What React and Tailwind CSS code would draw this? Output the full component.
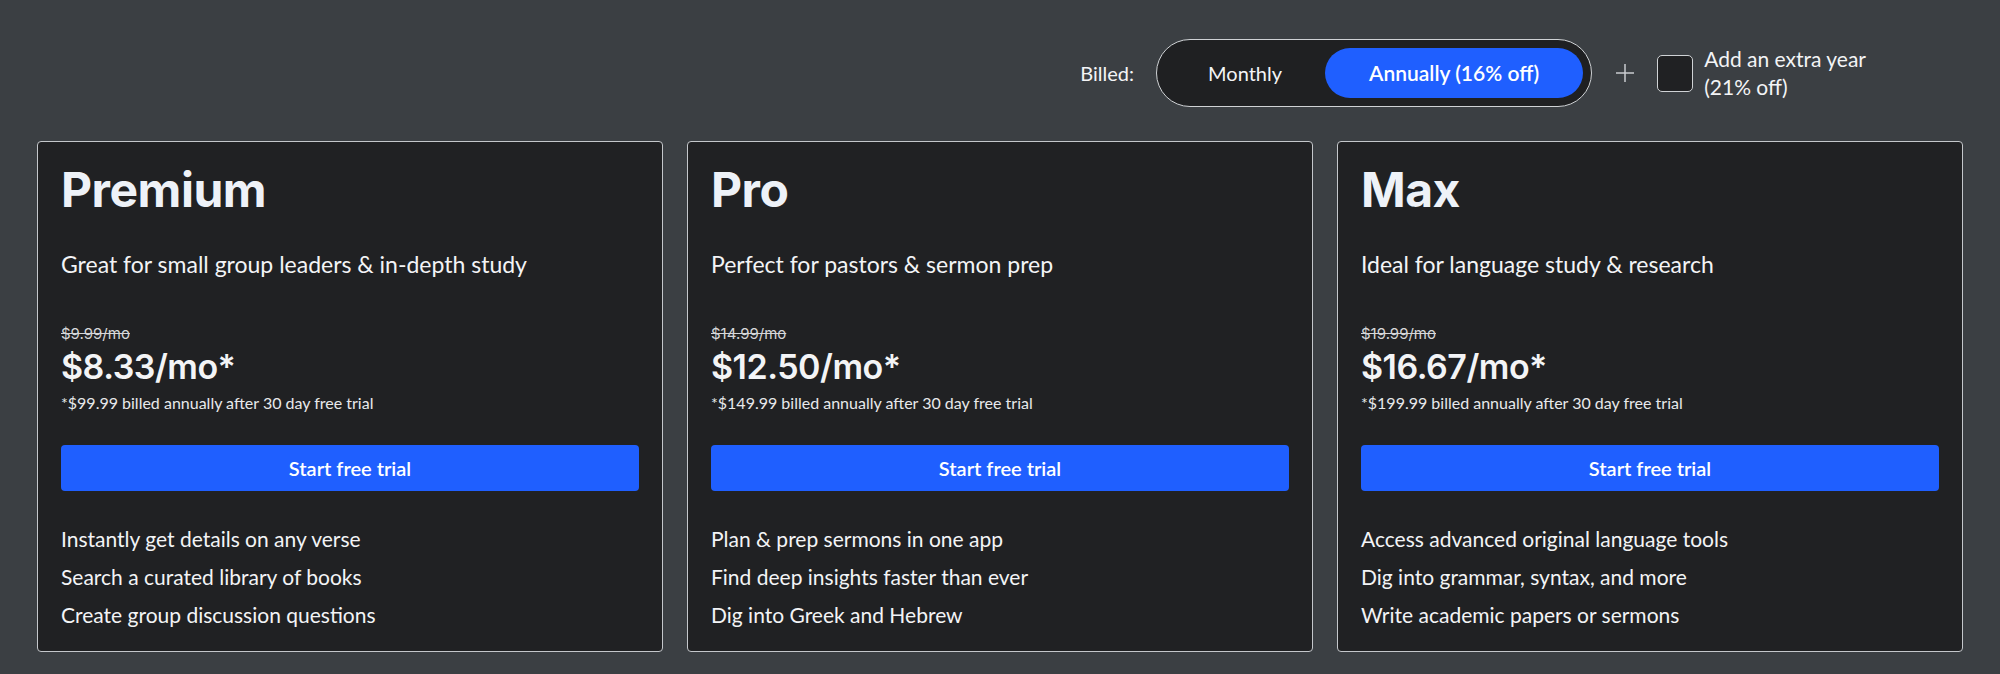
import React from "react";

const plans = [
  {
    name: "Premium",
    desc: "Great for small group leaders & in-depth study",
    old: "$9.99/mo",
    price: "$8.33/mo*",
    note: "*$99.99 billed annually after 30 day free trial",
    features: [
      "Instantly get details on any verse",
      "Search a curated library of books",
      "Create group discussion questions",
    ],
  },
  {
    name: "Pro",
    desc: "Perfect for pastors & sermon prep",
    old: "$14.99/mo",
    price: "$12.50/mo*",
    note: "*$149.99 billed annually after 30 day free trial",
    features: [
      "Plan & prep sermons in one app",
      "Find deep insights faster than ever",
      "Dig into Greek and Hebrew",
    ],
  },
  {
    name: "Max",
    desc: "Ideal for language study & research",
    old: "$19.99/mo",
    price: "$16.67/mo*",
    note: "*$199.99 billed annually after 30 day free trial",
    features: [
      "Access advanced original language tools",
      "Dig into grammar, syntax, and more",
      "Write academic papers or sermons",
    ],
  },
];

const body = { fontFamily: "Lato, 'Noto Sans', sans-serif" };
const head = { fontFamily: "Inter, 'Noto Sans', sans-serif" };

function Card({ p }) {
  return (
    <div className="flex flex-col rounded-[4px] border border-[#c4c7cb] bg-[#202123] px-[23px] pt-6 pb-[17px] text-[#f3f4f6]">
      <h2 style={head} className="text-[48px] font-bold leading-none tracking-[-0.5px] text-[#eef2f8]">
        {p.name}
      </h2>
      <p style={body} className="mt-[37px] text-[23px] leading-[26px]">
        {p.desc}
      </p>
      <div style={head} className="mt-[47px] text-[15px] leading-[20px] text-[#d6d7d9] line-through">
        {p.old}
      </div>
      <div style={head} className="mt-[6px] text-[34px] font-semibold leading-none tracking-[-0.5px]">
        {p.price}
      </div>
      <div style={body} className="mt-[9px] text-[16px] leading-[20px] text-[#e8e9eb]">
        {p.note}
      </div>
      <button
        style={body}
        className="mt-[32px] h-[46px] w-full rounded-[4px] bg-[#1f5fff] text-[20px] font-semibold text-white"
      >
        Start free trial
      </button>
      <ul style={body} className="mt-[29px] text-[21px] leading-[38px]">
        {p.features.map((f) => (
          <li key={f}>{f}</li>
        ))}
      </ul>
    </div>
  );
}

export default function App() {
  return (
    <div className="min-h-[674px] w-full bg-[#3b3f43] px-[37px] pt-[39px] pb-6">
      <div style={body} className="flex items-center justify-end pr-[97px] text-[20px] text-[#f3f4f6]">
        <span className="mr-[22px]">Billed:</span>
        <div className="flex items-center rounded-full border border-[#cfd2d5] bg-[#1f2022] p-2">
          <button className="h-[50px] rounded-full px-[43px] text-[20px] text-[#f3f4f6]">Monthly</button>
          <button className="h-[50px] rounded-full bg-[#1f5fff] px-[44px] text-[21px] font-semibold text-white">
            Annually (16% off)
          </button>
        </div>
        <svg className="ml-[22px] h-[22px] w-[22px]" viewBox="0 0 22 22" fill="none">
          <path d="M11 2v18M2 11h18" stroke="#c9ccd0" strokeWidth="1.5" />
        </svg>
        <div className="ml-[21px] h-[37px] w-[36px] rounded-[5px] border border-[#cfd2d5] bg-[#202123]" />
        <div className="ml-[11px] text-[21px] leading-[28px]">
          Add an extra year
          <br />
          (21% off)
        </div>
      </div>
      <div className="mt-[34px] grid grid-cols-3 gap-6">
        {plans.map((p) => (
          <Card key={p.name} p={p} />
        ))}
      </div>
    </div>
  );
}
